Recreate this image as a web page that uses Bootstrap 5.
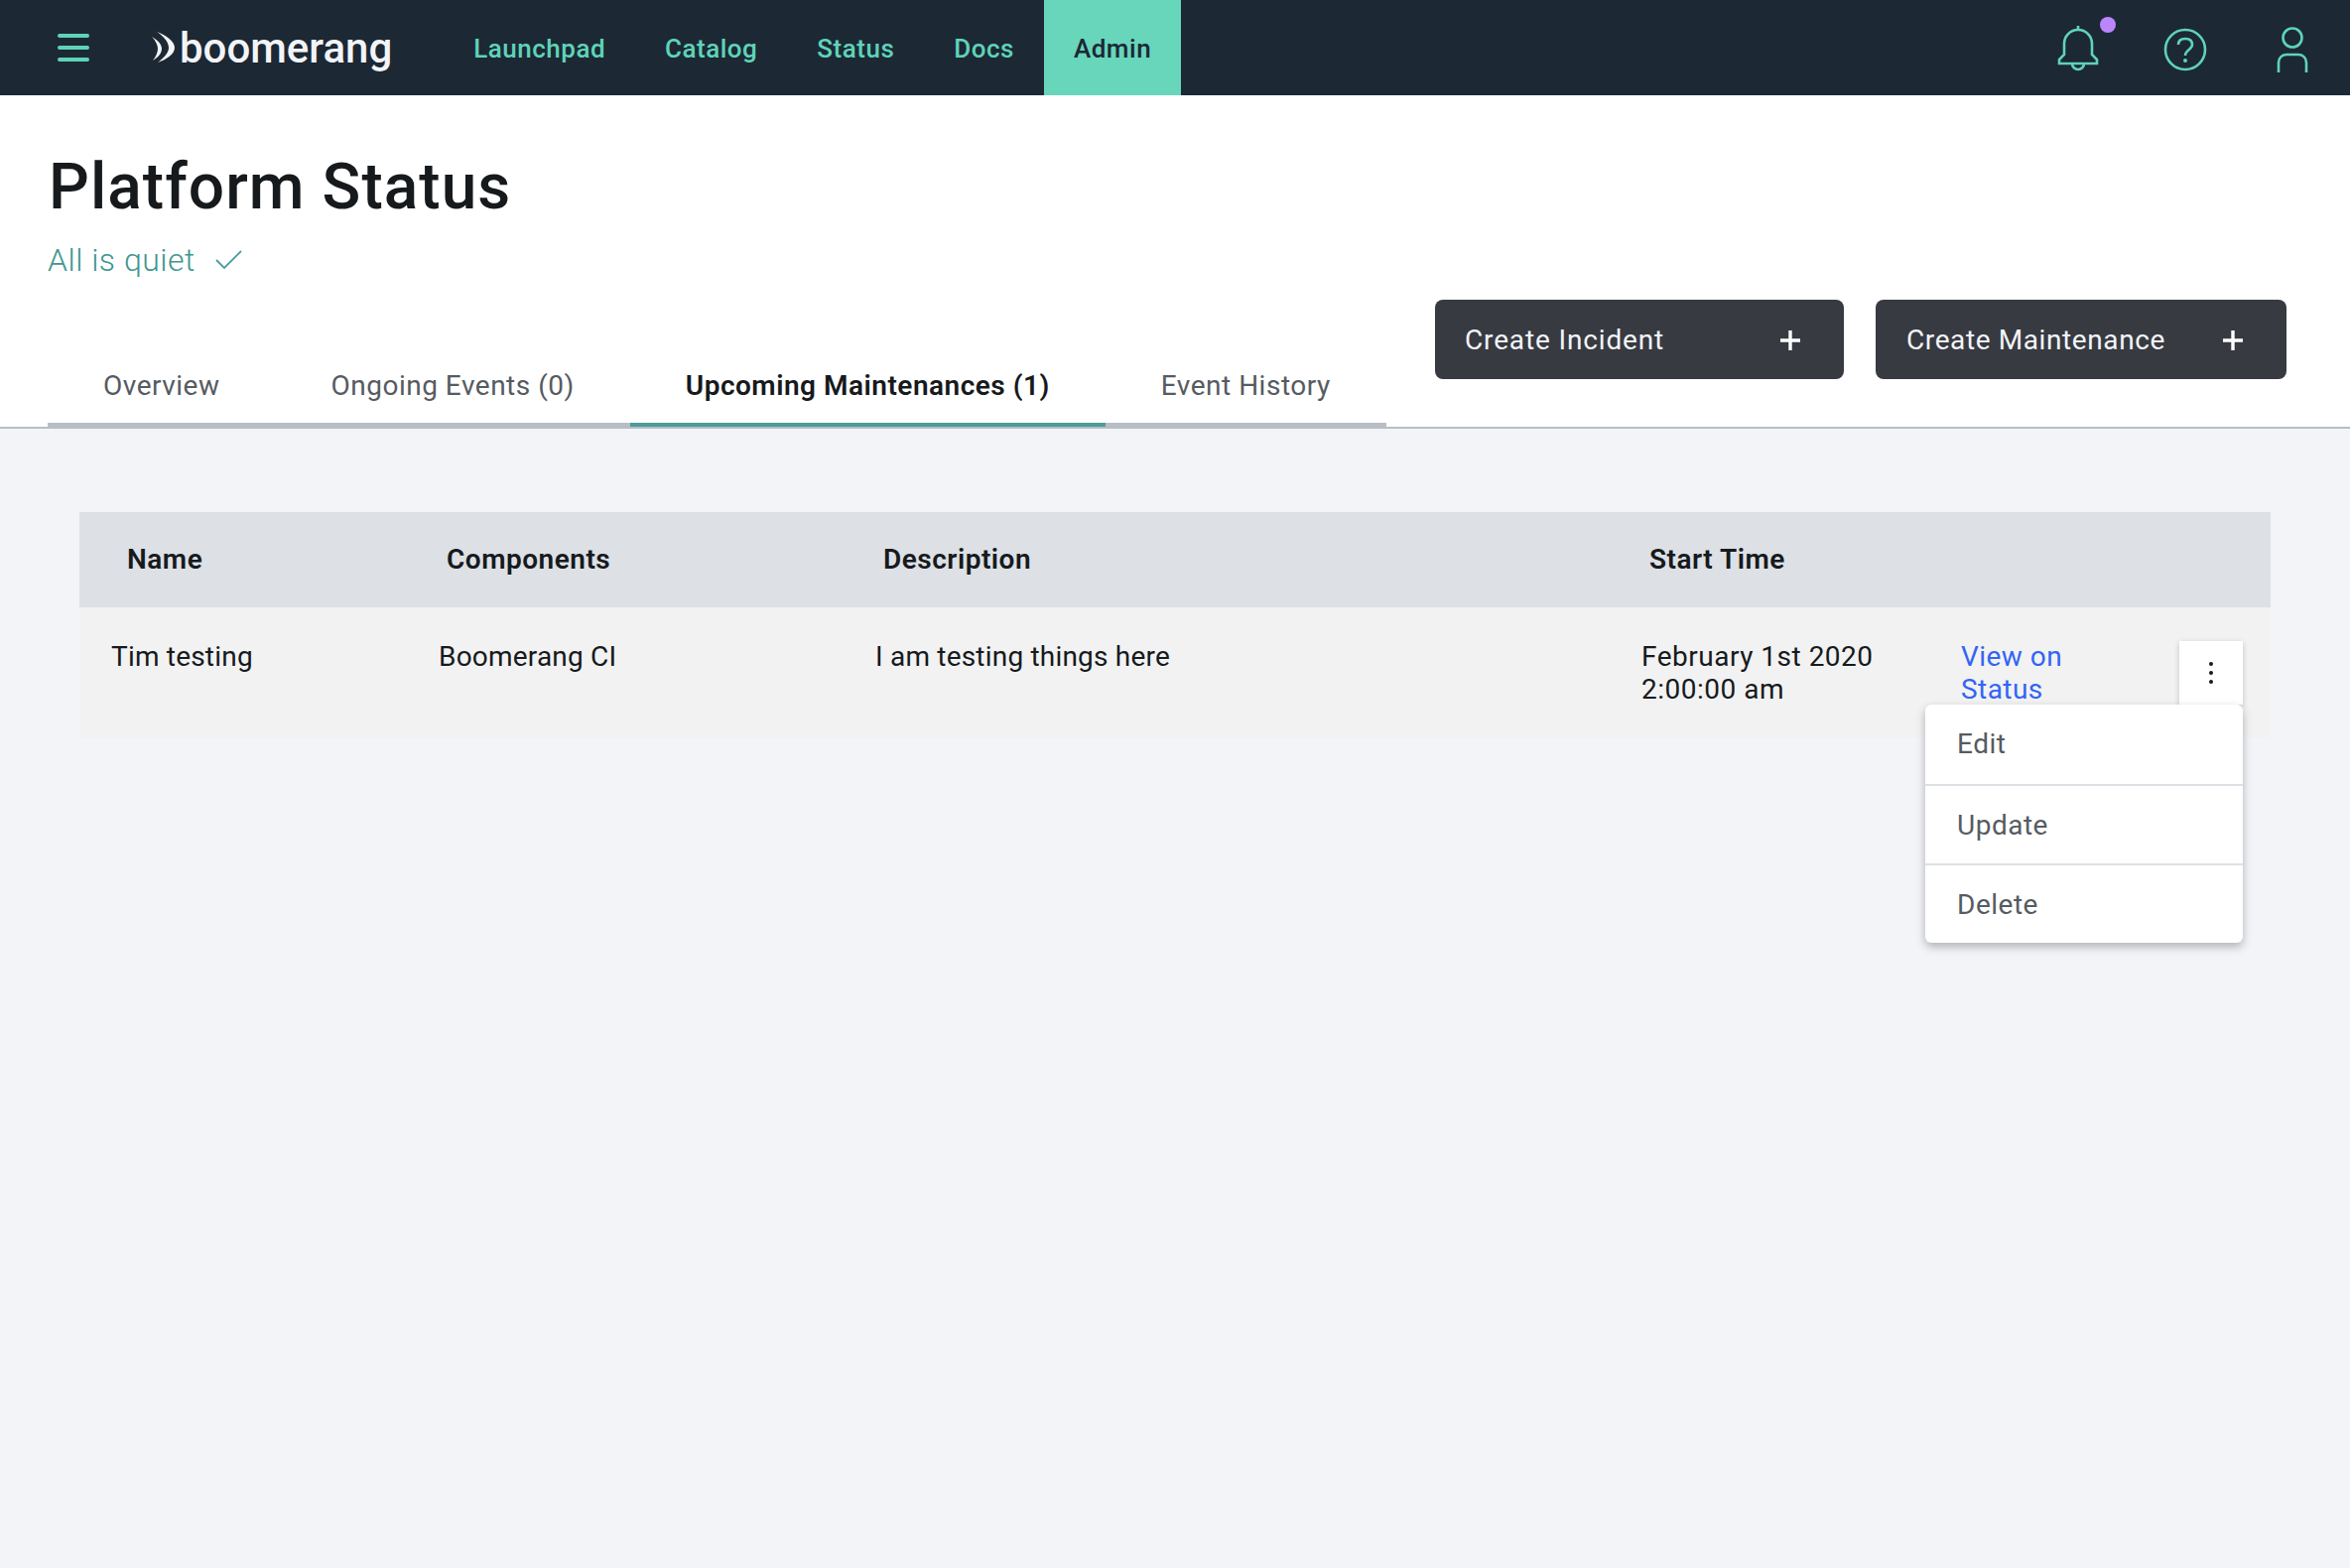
<!DOCTYPE html>
<html lang="en">
<head>
    <meta charset="UTF-8">
    <title>Platform Status</title>
    <link href="https://cdn.jsdelivr.net/npm/bootstrap@5.3.0/dist/css/bootstrap.min.css" rel="stylesheet">
    <style>
        body { font-family: Roboto, "Noto Sans", sans-serif; font-size: 28px; line-height: 46px; background: #f2f4f8; color: #161a1d; min-height: 1580px; letter-spacing: .5px; }
        .top-bar { height: 96px; background: #1c2834; padding: 0; }
        .burger { margin-left: 58px; width: 32px; }
        .burger span { display: block; height: 4px; border-radius: 2px; background: #5fd3b8; margin-bottom: 8px; }
        .burger span:last-child { margin-bottom: 0; }
        .brand { margin-left: 63px; margin-right: 52px; padding-top: 2px; color: #f2f4f8; font-size: 42px; font-weight: 500; letter-spacing: 0; text-decoration: none; }
        .brand svg { margin-top: -2px; }
        .top-bar .nav-link { height: 96px; line-height: 96px; padding: 1px 30px 0; color: #5fd3b8; font-size: 26px; font-weight: 500; letter-spacing: .5px; }
        .top-bar .nav-link.active { background: #67d6bb; color: #1c2834; }
        .top-icons { margin-left: auto; }
        .bell-icon { margin-right: 46px; }
        .help-icon { margin-right: 70px; margin-top: 4px; }
        .user-icon { margin-right: 42px; margin-top: 3px; }
        .page-head { background: #fff; border-bottom: 2px solid #b8bdc6; padding: 58px 64px 0 48px; }
        .page-title { font-size: 64px; line-height: 70px; font-weight: 500; margin: 0 0 0 1px; letter-spacing: 1.05px; }
        .quiet { color: #3f9690; font-size: 32px; line-height: 44px; font-weight: 300; margin-top: 16px; }
        .quiet svg { margin-left: 20px; }
        .tab-row { margin-top: 18px; }
        .tab-strip { border-bottom: 4px solid #b8bdc6; margin-bottom: 0; }
        .tab-strip .nav-link { color: #565b62; padding: 32px 56px 14px; margin-bottom: -4px; border-bottom: 4px solid transparent; font-size: 28px; line-height: 46px; letter-spacing: .5px; }
        .tab-strip .nav-link.active { color: #161a1d; font-weight: 600; border-bottom-color: #4c9e98; }
        .btn-group-gap { gap: 32px; }
        .act-btn { background: #373a41; color: #f2f4f8; width: 412px; height: 80px; border: 0; border-radius: 8px; padding: 2px 44px 0 30px; font-size: 28px; letter-spacing: .85px; margin-bottom: 48px; }
        .act-btn:hover { background: #373a41; color: #f2f4f8; }
        .act-btn + .act-btn { width: 414px; letter-spacing: .6px; padding-left: 31px; }
        .table-wrap { padding: 84px 80px 0; position: relative; }
        .status-table { table-layout: fixed; width: 100%; margin: 0; --bs-table-bg: transparent; }
        .status-table th, .status-table td { border: 0; padding: 0; }
        .status-table thead tr { background: #dde0e5; }
        .status-table th { height: 96px; vertical-align: middle; padding-left: 40px; font-weight: 600; color: #161a1d; }
        .status-table th:first-child { padding-left: 48px; }
        .status-table tbody tr { background: #f2f2f2; }
        .status-table td { height: 131px; vertical-align: top; padding: 33px 0 0 32px; color: #161a1d; line-height: 33px; letter-spacing: .2px; }
        .status-table td:nth-child(4) { letter-spacing: .5px; }
        .status-table td a { color: #3265f5; text-decoration: none; display: block; width: 130px; letter-spacing: .45px; }
        .kebab { position: absolute; left: 2196px; top: 214px; width: 64px; height: 64px; background: #fff; border: 0; padding: 0 0 3px; box-shadow: 0 2px 6px rgba(0,0,0,.2); }
        .row-menu { display: block; position: absolute; left: 1940px; top: 278px; width: 320px; height: 240px; padding: 0; border: 0; border-radius: 6px; box-shadow: 0 4px 10px rgba(0,0,0,.28); overflow: hidden; }
        .row-menu .dropdown-item { height: 80px; line-height: 80px; padding: 0 32px; color: #565b62; font-size: 28px; }
        .row-menu li + li { border-top: 2px solid #dde0e5; }
        .row-menu li + li .dropdown-item { height: 78px; }
    </style>
</head>
<body>
    <!-- Navbar -->
    <nav class="top-bar d-flex align-items-center">
        <div class="burger"><span></span><span></span><span></span></div>
        <a class="brand d-flex align-items-center" href="#">
            <svg width="24" height="32" viewBox="0 0 24 32" fill="#f2f4f8" class="me-1">
                <path d="M0 5c5 3 10 7 10 12s-4 9-9 12c3-4 5-8 5-12S3 8 0 5z"/>
                <path d="M5 0c8 3 18 9 18 16S14 28 6 31c5-4 11-9 11-15S11 4 5 0z"/>
            </svg>
            boomerang
        </a>
        <ul class="nav">
            <li class="nav-item"><a class="nav-link" href="#">Launchpad</a></li>
            <li class="nav-item"><a class="nav-link" href="#">Catalog</a></li>
            <li class="nav-item"><a class="nav-link" href="#">Status</a></li>
            <li class="nav-item"><a class="nav-link" href="#">Docs</a></li>
            <li class="nav-item"><a class="nav-link active" href="#">Admin</a></li>
        </ul>
        <div class="top-icons d-flex align-items-center">
            <svg class="bell-icon" width="72" height="64" viewBox="0 0 72 64" fill="none" stroke="#5fd3b8" stroke-width="2.6">
                <path d="M13 48h38v-4l-5-5V28a14 14 0 0 0-28 0v11l-5 5z"/>
                <path d="M26 48a6 6 0 0 0 12 0M32 14v-4"/>
                <circle cx="62" cy="9" r="8" fill="#bb86fc" stroke="none"/>
            </svg>
            <svg class="help-icon" width="44" height="44" viewBox="0 0 44 44" fill="none" stroke="#5fd3b8" stroke-width="2.6">
                <circle cx="22" cy="22" r="20"/>
                <path d="M15 17c0-4 3-6 7-6s7 2 7 6c0 5-7 5-7 11"/>
                <circle cx="22" cy="33" r="2" fill="#5fd3b8" stroke="none"/>
            </svg>
            <svg class="user-icon" width="32" height="46" viewBox="0 0 32 46" fill="none" stroke="#5fd3b8" stroke-width="2.6">
                <circle cx="16" cy="11" r="9.5"/>
                <path d="M2 46V36c0-5 4-8 8-8h12c4 0 8 3 8 8v10"/>
            </svg>
        </div>
    </nav>

    <!-- Header -->
    <header class="page-head">
        <h1 class="page-title">Platform Status</h1>
        <div class="quiet d-flex align-items-center">All is quiet
            <svg width="28" height="20" viewBox="0 0 28 20" fill="none" stroke="#4c9e98" stroke-width="1.8"><path d="M1 10l8 8L26 1"/></svg>
        </div>
        <div class="tab-row d-flex justify-content-between align-items-end">
            <ul class="nav tab-strip">
                <li class="nav-item"><a class="nav-link" href="#">Overview</a></li>
                <li class="nav-item"><a class="nav-link" href="#">Ongoing Events (0)</a></li>
                <li class="nav-item"><a class="nav-link active" href="#">Upcoming Maintenances (1)</a></li>
                <li class="nav-item"><a class="nav-link" href="#">Event History</a></li>
            </ul>
            <div class="d-flex btn-group-gap">
                <button class="btn act-btn d-flex align-items-center justify-content-between" type="button">Create Incident
                    <svg width="20" height="20" viewBox="0 0 20 20" stroke="#fff" stroke-width="3.4"><path d="M10 0v20M0 10h20"/></svg></button>
                <button class="btn act-btn d-flex align-items-center justify-content-between" type="button">Create Maintenance
                    <svg width="20" height="20" viewBox="0 0 20 20" stroke="#fff" stroke-width="3.4"><path d="M10 0v20M0 10h20"/></svg></button>
            </div>
        </div>
    </header>

    <!-- Contenido -->
    <main class="table-wrap">
        <table class="table status-table">
            <colgroup><col style="width:330px"><col style="width:440px"><col style="width:772px"><col style="width:322px"><col></colgroup>
            <thead>
                <tr><th>Name</th><th>Components</th><th>Description</th><th>Start Time</th><th></th></tr>
            </thead>
            <tbody>
                <tr>
                    <td>Tim testing</td>
                    <td>Boomerang CI</td>
                    <td>I am testing things here</td>
                    <td>February 1st 2020<br>2:00:00 am</td>
                    <td><a href="#">View on Status</a></td>
                </tr>
            </tbody>
        </table>
        <button class="kebab" type="button" aria-label="Options">
            <svg width="6" height="24" viewBox="0 0 6 24" fill="#161a1d"><circle cx="3" cy="3" r="2"/><circle cx="3" cy="12" r="2"/><circle cx="3" cy="21" r="2"/></svg>
        </button>
        <ul class="dropdown-menu row-menu">
            <li><a class="dropdown-item" href="#">Edit</a></li>
            <li><a class="dropdown-item" href="#">Update</a></li>
            <li><a class="dropdown-item" href="#">Delete</a></li>
        </ul>
    </main>

    <script src="https://cdn.jsdelivr.net/npm/bootstrap@5.3.0/dist/js/bootstrap.bundle.min.js"></script>
</body>
</html>
